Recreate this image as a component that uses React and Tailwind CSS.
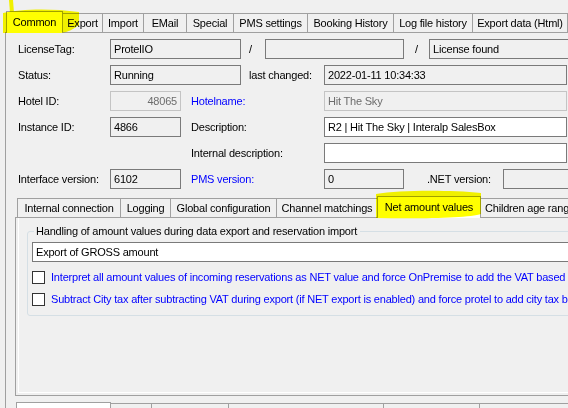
import React from "react";

function Tab({ sel, cls = "", children }) {
  if (sel) {
    return (
      <div className={`relative z-10 -mb-px h-[22px] -ml-px flex items-center justify-center border border-b-0 border-[#a0a0a0] bg-white whitespace-nowrap ${cls}`}>
        {children}
      </div>
    );
  }
  return (
    <div className={`h-[19px] -ml-px flex items-center justify-center border border-b-0 border-[#a0a0a0] bg-[#f0f0f0] whitespace-nowrap overflow-hidden ${cls}`}>
      {children}
    </div>
  );
}

function Input({ cls = "", children, disabled, white, right }) {
  return (
    <div
      className={`h-[20px] shrink-0 flex items-center px-[3px] border whitespace-nowrap overflow-hidden ${
        disabled ? "border-[#c4c4c4] text-[#6d6d6d] bg-[#f0f0f0]" : "border-[#7a7a7a]"
      } ${white ? "bg-white" : ""} ${right ? "justify-end" : ""} ${cls}`}
    >
      {children}
    </div>
  );
}

export default function App() {
  return (
    <div className="relative w-[568px] h-[408px] overflow-hidden bg-[#f0f0f0] text-[11px] leading-none text-black font-['Liberation_Sans',Arial,sans-serif] tracking-[-0.2px]">
      {/* top tabs */}
      <div className="flex items-end h-[32px] pl-[7px]">
        <Tab sel cls="w-[57px]">Common</Tab>
        <Tab cls="w-[41px]">Export</Tab>
        <Tab cls="w-[42px]">Import</Tab>
        <Tab cls="w-[44px]">EMail</Tab>
        <Tab cls="w-[48px]">Special</Tab>
        <Tab cls="w-[75px]">PMS settings</Tab>
        <Tab cls="w-[87px]">Booking History</Tab>
        <Tab cls="w-[80px]">Log file history</Tab>
        <Tab cls="w-[96px]">Export data (Html)</Tab>
      </div>

      {/* main panel */}
      <div className="ml-[5px] w-[600px] h-[376px] border-l border-t border-[#a0a0a0] pt-[6px] pl-[9px]">
        <div className="flex flex-col gap-[6px] pl-[3px]">
          {/* row 1 */}
          <div className="flex items-center h-[20px]">
            <div className="w-[92px]">LicenseTag:</div>
            <Input cls="w-[131px]">ProtelIO</Input>
            <div className="w-[24px] pl-[8px]">/</div>
            <Input cls="w-[139px]"></Input>
            <div className="w-[25px] pl-[11px]">/</div>
            <Input cls="w-[150px]">License found</Input>
          </div>
          {/* row 2 */}
          <div className="flex items-center h-[20px]">
            <div className="w-[92px]">Status:</div>
            <Input cls="w-[131px]">Running</Input>
            <div className="w-[83px] pl-[8px]">last changed:</div>
            <Input cls="w-[243px]">2022-01-11 10:34:33</Input>
          </div>
          {/* row 3 */}
          <div className="flex items-center h-[20px]">
            <div className="w-[92px]">Hotel ID:</div>
            <Input disabled right cls="w-[71px]">48065</Input>
            <div className="w-[143px] pl-[10px] text-[#0000ff]">Hotelname:</div>
            <Input disabled cls="w-[243px]">Hit The Sky</Input>
          </div>
          {/* row 4 */}
          <div className="flex items-center h-[20px]">
            <div className="w-[92px]">Instance ID:</div>
            <Input cls="w-[71px]">4866</Input>
            <div className="w-[143px] pl-[10px]">Description:</div>
            <Input white cls="w-[243px]">R2 | Hit The Sky | Interalp SalesBox</Input>
          </div>
          {/* row 5 */}
          <div className="flex items-center h-[20px]">
            <div className="w-[163px]"></div>
            <div className="w-[143px] pl-[10px]">Internal description:</div>
            <Input white cls="w-[243px]"></Input>
          </div>
          {/* row 6 */}
          <div className="flex items-center h-[20px]">
            <div className="w-[92px]">Interface version:</div>
            <Input cls="w-[71px]">6102</Input>
            <div className="w-[143px] pl-[10px] text-[#0000ff]">PMS version:</div>
            <Input cls="w-[80px]">0</Input>
            <div className="w-[99px] pl-[23px]">.NET version:</div>
            <Input cls="w-[80px]"></Input>
          </div>
        </div>

        {/* inner tabs */}
        <div className="mt-[6px] flex items-end h-[22px] pl-[3px]">
          <Tab cls="w-[104px]">Internal connection</Tab>
          <Tab cls="w-[51px]">Logging</Tab>
          <Tab cls="w-[107px]">Global configuration</Tab>
          <Tab cls="w-[102px]">Channel matchings</Tab>
          <Tab sel cls="w-[104px]">Net amount values</Tab>
          <Tab cls="w-[100px] justify-start pl-[4px]">Children age ranges</Tab>
        </div>

        {/* inner panel */}
        <div className="w-[580px] h-[179px] border border-[#a0a0a0] pl-[2px] pb-[2px]">
          <div className="h-full border-l border-b border-white pl-[8px] pt-[8px]">
            <fieldset className="w-[560px] border border-[#d5dfe5] rounded-[3px] pb-[9px]">
              <legend className="ml-[6px] pl-[2px] pr-[3px] leading-[11px]">
                Handling of amount values during data export and reservation import
              </legend>
              <div className="pl-[4px] pt-[5px] flex flex-col">
                <Input white cls="w-[560px]">Export of GROSS amount</Input>
                <div className="mt-[9px] flex items-center h-[13px] gap-[6px] whitespace-nowrap text-[#0000ff]">
                  <div className="w-[13px] h-[13px] border border-[#333333] bg-white shrink-0"></div>
                  <span>Interpret all amount values of incoming reservations as NET value and force OnPremise to add the VAT based on the tax rates</span>
                </div>
                <div className="mt-[9px] flex items-center h-[13px] gap-[6px] whitespace-nowrap text-[#0000ff]">
                  <div className="w-[13px] h-[13px] border border-[#333333] bg-white shrink-0"></div>
                  <span>Subtract City tax after subtracting VAT during export (if NET export is enabled) and force protel to add city tax based</span>
                </div>
              </div>
            </fieldset>
          </div>
        </div>

        {/* bottom tabs */}
        <div className="mt-[6px] flex items-start h-[10px] pl-[1px]">
          <div className="w-[95px] h-[10px] border border-b-0 border-[#a0a0a0] bg-white"></div>
          <div className="mt-px -ml-px w-[42px] h-[10px] border border-b-0 border-[#a0a0a0]"></div>
          <div className="mt-px -ml-px w-[78px] h-[10px] border border-b-0 border-[#a0a0a0]"></div>
          <div className="mt-px -ml-px w-[156px] h-[10px] border border-b-0 border-[#a0a0a0]"></div>
          <div className="mt-px -ml-px w-[97px] h-[10px] border border-b-0 border-[#a0a0a0]"></div>
          <div className="mt-px -ml-px w-[100px] h-[10px] border border-b-0 border-[#a0a0a0]"></div>
        </div>
      </div>

      {/* highlighter annotations */}
      <svg
        className="absolute left-0 top-0 z-20 pointer-events-none mix-blend-multiply"
        width="568"
        height="408"
        viewBox="0 0 568 408"
      >
        <path d="M3,13 C20,9 50,8 79,12 L79,25 C74,29 68,32 61,33 L3,33 Z" fill="#ffff00" />
        <path d="M9,0 L13,0 L14,13 L10,13 Z" fill="#ffff00" />
        <path d="M376,194 C400,190 450,190 481,193 L481,214 C470,218 420,219 376,218 Z" fill="#ffff00" />
      </svg>
    </div>
  );
}
